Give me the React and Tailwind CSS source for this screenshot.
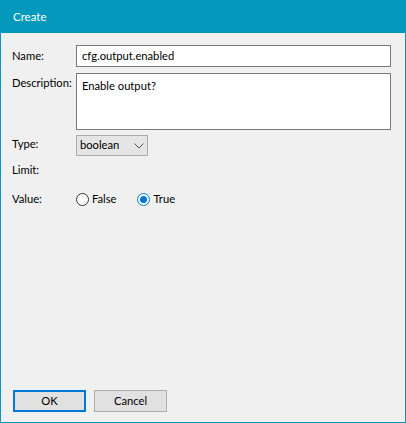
import React from "react";

const font = { fontFamily: 'Lato, "Noto Sans", sans-serif' };

const Radio = ({ checked, label }) => (
  <div className="flex items-center gap-[3px]">
    <div
      className={
        checked
          ? "w-[13px] h-[13px] rounded-full border border-[#0078d7] bg-white flex items-center justify-center"
          : "w-[13px] h-[13px] rounded-full border border-[#333333] bg-white"
      }
    >
      {checked && <div className="w-[7px] h-[7px] rounded-full bg-[#0078d7]" />}
    </div>
    <span className="text-[11.2px] text-black leading-none">{label}</span>
  </div>
);

const App = () => {
  return (
    <div
      className="w-[406px] h-[423px] flex flex-col border border-[#0499bc] bg-[#f0f0f0]"
      style={font}
    >
      <div className="h-[32px] bg-[#0499bc] flex items-center px-[12px] text-white text-[11.5px]">
        Create
      </div>

      <div className="flex-1 flex flex-col pl-[11px] pr-[14px] pt-[12px] pb-[10px] text-[11.2px] text-black">
        <div className="flex items-center h-[22px]">
          <div className="w-[64px] shrink-0">Name:</div>
          <div className="flex-1 h-[22px] border border-[#7a7a7a] bg-white flex items-center px-[5px]">
            cfg.output.enabled
          </div>
        </div>

        <div className="flex mt-[6px] h-[57px]">
          <div className="w-[64px] shrink-0 pt-[2px]">Description:</div>
          <div className="flex-1 border border-[#7a7a7a] bg-white px-[5px] pt-[4px]">
            Enable output?
          </div>
        </div>

        <div className="flex mt-[5px] h-[21px]">
          <div className="w-[64px] shrink-0 pt-[1px]">Type:</div>
          <div className="w-[72px] h-[21px] border border-[#adadad] bg-[#e5e5e5] flex items-center justify-between pl-[3px] pr-[3px]">
            <span>boolean</span>
            <svg width="10" height="6" viewBox="0 0 10 6">
              <path d="M0.5 0.5 L5 5 L9.5 0.5" fill="none" stroke="#555" strokeWidth="1" />
            </svg>
          </div>
        </div>

        <div className="flex mt-[5px] h-[18px] items-center">
          <div className="w-[64px] shrink-0">Limit:</div>
        </div>

        <div className="flex mt-[11px] h-[18px] items-center">
          <div className="w-[64px] shrink-0">Value:</div>
          <div className="flex items-center gap-[21px]">
            <Radio label="False" />
            <Radio checked label="True" />
          </div>
        </div>

        <div className="flex-1" />

        <div className="flex gap-[8px] pl-[1px]">
          <button className="w-[73px] h-[22px] border-2 border-[#0078d7] bg-[#e1e1e1] text-[11.2px] flex items-center justify-center">
            OK
          </button>
          <button className="w-[73px] h-[22px] border border-[#adadad] bg-[#e1e1e1] text-[11.2px] flex items-center justify-center">
            Cancel
          </button>
        </div>
      </div>
    </div>
  );
};

export default App;
